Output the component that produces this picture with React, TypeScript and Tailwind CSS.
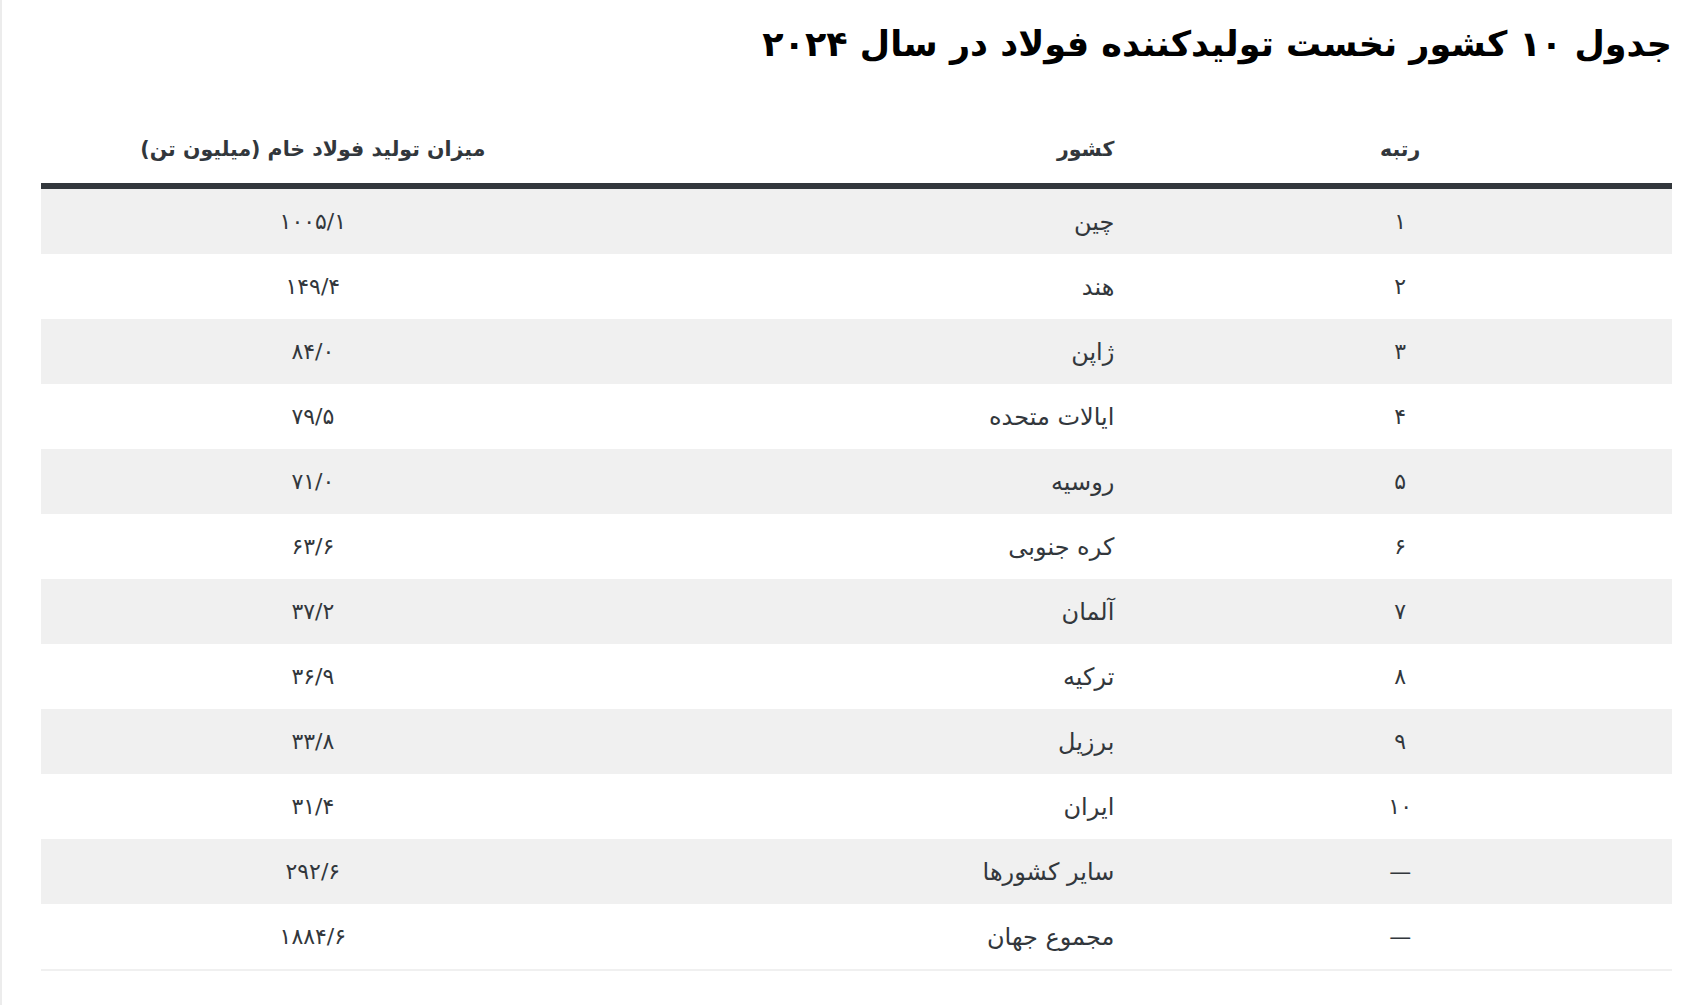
const rows: [string, string, string][] = [
  ["۱", "چین", "۱۰۰۵/۱"],
  ["۲", "هند", "۱۴۹/۴"],
  ["۳", "ژاپن", "۸۴/۰"],
  ["۴", "ایالات متحده", "۷۹/۵"],
  ["۵", "روسیه", "۷۱/۰"],
  ["۶", "کره جنوبی", "۶۳/۶"],
  ["۷", "آلمان", "۳۷/۲"],
  ["۸", "ترکیه", "۳۶/۹"],
  ["۹", "برزیل", "۳۳/۸"],
  ["۱۰", "ایران", "۳۱/۴"],
  ["—", "سایر کشورها", "۲۹۲/۶"],
  ["—", "مجموع جهان", "۱۸۸۴/۶"],
];

export default function App() {
  return (
    <div
      dir="rtl"
      className="min-h-screen bg-white border-l-2 border-[#ececec] pl-[39px] pr-[26px] text-[#32373c]"
      style={{ fontFamily: '"DejaVu Sans", sans-serif' }}
    >
      {/* Title */}
      <h1 className="h-[115px] pt-[14px] text-[35px] leading-[60px] font-black text-black text-right">
        جدول ۱۰ کشور نخست تولیدکننده فولاد در سال ۲۰۲۴
      </h1>

      {/* Table */}
      <div className="border-b-2 border-[#f0f0f0]">
        <div className="grid grid-cols-3 h-[74px] items-center border-b-[6px] border-[#32373c] text-[20.5px] font-bold">
          <div className="text-center">رتبه</div>
          <div className="text-right pr-[14px]">کشور</div>
          <div className="text-center">میزان تولید فولاد خام (میلیون تن)</div>
        </div>
        {rows.map(([rank, country, value], i) => (
          <div
            key={i}
            className={
              i % 2 === 0
                ? "grid grid-cols-3 h-[65px] items-center bg-[#f0f0f0] text-[22px]"
                : "grid grid-cols-3 h-[65px] items-center bg-white text-[22px]"
            }
          >
            <div className="text-center">{rank}</div>
            <div className="text-right pr-[14px] text-[24px]">{country}</div>
            <div className="text-center">{value}</div>
          </div>
        ))}
      </div>
    </div>
  );
}
